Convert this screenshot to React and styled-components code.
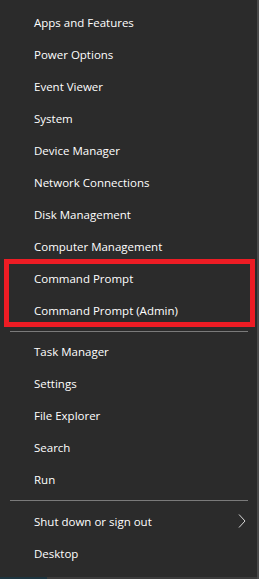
import React from 'react';
import styled, { createGlobalStyle } from 'styled-components';

const GlobalStyle = createGlobalStyle`
  html, body {
    margin: 0;
    padding: 0;
    background: #2b2b2b;
  }
`;

const Frame = styled.div`
  width: 259px;
  height: 579px;
  display: flex;
  flex-direction: column;
  background: #2b2b2b;
  box-sizing: border-box;
  border-right: 2px solid #4a4a4a;
  font-family: "Open Sans", "Noto Sans", sans-serif;
  overflow: hidden;
`;

const Menu = styled.ul`
  list-style: none;
  margin: 0;
  padding: 6px 0 0;
  flex: 1;
`;

const Item = styled.li`
  height: 32px;
  display: flex;
  align-items: center;
  justify-content: space-between;
  padding: 0 10px 0 34px;
  color: #ffffff;
  font-size: 11.5px;
  cursor: default;
`;

const Highlight = styled.div`
  position: relative;

  &::after {
    content: '';
    position: absolute;
    top: -3px;
    bottom: -1px;
    left: 4px;
    right: 2px;
    border: 5px solid #ed1c24;
    pointer-events: none;
  }
`;

const Separator = styled.li`
  height: 1px;
  margin: ${props => props.top}px 9px ${props => props.bottom}px 10px;
  background: #7a7a7a;
`;

const TaskBar = styled.div`
  height: 2px;
  display: flex;
  background: #3c3c3c;

  > span {
    width: 47px;
    background: #1d3540;
  }
`;

const Chevron = () => (
  <svg width="10" height="16" viewBox="0 0 10 16">
    <polyline points="2,1.5 8,8 2,14.5" fill="none" stroke="#d8d8d8" strokeWidth="1" />
  </svg>
);

const top = ['Apps and Features', 'Power Options', 'Event Viewer', 'System',
  'Device Manager', 'Network Connections', 'Disk Management', 'Computer Management'];
const highlighted = ['Command Prompt', 'Command Prompt (Admin)'];
const middle = ['Task Manager', 'Settings', 'File Explorer', 'Search', 'Run'];

export default function App() {
  return (
    <Frame>
      <GlobalStyle />
      <Menu>
        {top.map(label => <Item key={label}>{label}</Item>)}
        <Highlight>
          {highlighted.map(label => <Item key={label}>{label}</Item>)}
        </Highlight>
        <Separator top={5} bottom={3} />
        {middle.map(label => <Item key={label}>{label}</Item>)}
        <Separator top={5} bottom={4} />
        <Item>Shut down or sign out <Chevron /></Item>
        <Item>Desktop</Item>
      </Menu>
      <TaskBar><span /></TaskBar>
    </Frame>
  );
}
